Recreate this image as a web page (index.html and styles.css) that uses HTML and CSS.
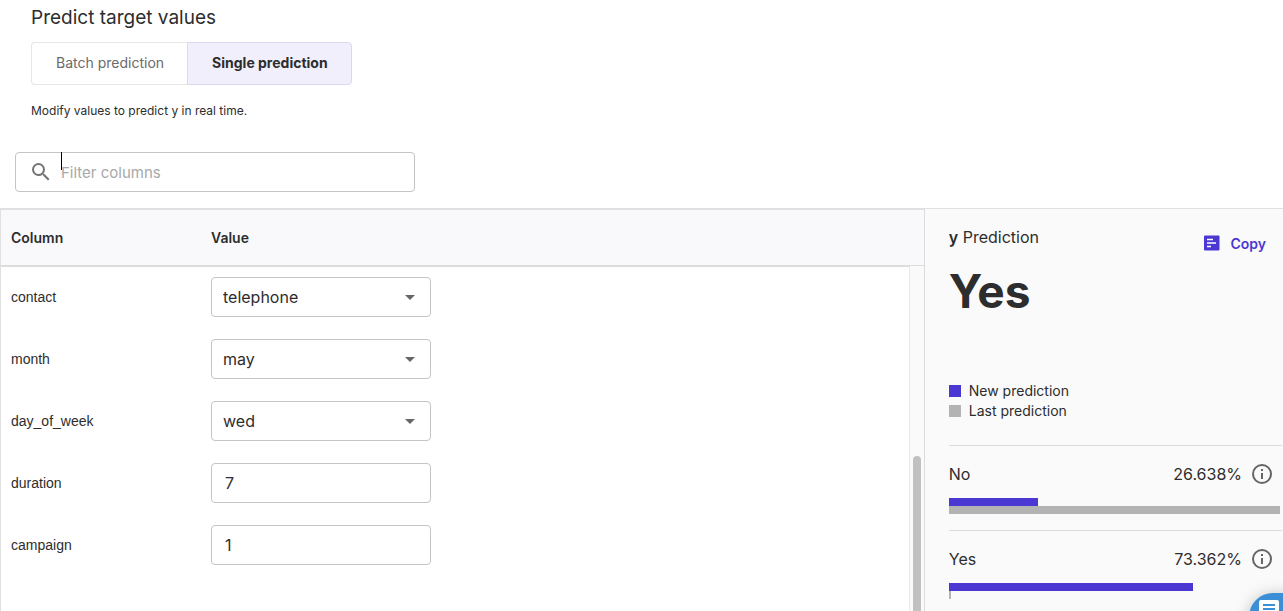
FILE: index.html
```html
<!DOCTYPE html>
<html lang="en">
<head>
    <meta charset="UTF-8">
    <meta name="viewport" content="width=device-width, initial-scale=1.0">
    <title>Predict target values</title>
    <link rel="stylesheet" href="styles.css">
</head>
<body>
    <header class="header">
      <h1>Predict target values</h1>
      <div class="tabs">
        <button type="button" class="tab">Batch prediction</button>
        <button type="button" class="tab active">Single prediction</button>
      </div>
      <p class="hint">Modify values to predict y in real time.</p>
    </header>

    <div class="filter">
      <svg class="search-icon" viewBox="0 0 24 24" aria-hidden="true">
        <path d="M15.5 14h-.79l-.28-.27A6.471 6.471 0 0 0 16 9.5 6.5 6.5 0 1 0 9.5 16c1.61 0 3.09-.59 4.23-1.57l.27.28v.79l5 4.99L20.49 19l-4.99-5zm-6 0C7.01 14 5 11.99 5 9.5S7.01 5 9.5 5 14 7.01 14 9.5 11.99 14 9.5 14z"/>
      </svg>
      <input type="text" id="filter" placeholder="Filter columns" aria-label="Filter columns">
      <span class="caret"></span>
    </div>

    <main class="content">
      <section class="columns">
        <div class="scroll-area">
          <table>
            <thead>
              <tr>
                <th class="name">Column</th>
                <th>Value</th>
              </tr>
            </thead>
            <tbody>
              <tr>
                <td><label for="contact">contact</label></td>
                <td>
                  <div class="select">
                    <select id="contact">
                      <option>cellular</option>
                      <option selected>telephone</option>
                    </select>
                    <svg viewBox="0 0 24 24" aria-hidden="true"><path d="M7 10l5 5 5-5z"/></svg>
                  </div>
                </td>
              </tr>
              <tr>
                <td><label for="month">month</label></td>
                <td>
                  <div class="select">
                    <select id="month">
                      <option>apr</option>
                      <option selected>may</option>
                      <option>jun</option>
                    </select>
                    <svg viewBox="0 0 24 24" aria-hidden="true"><path d="M7 10l5 5 5-5z"/></svg>
                  </div>
                </td>
              </tr>
              <tr>
                <td><label for="day_of_week">day_of_week</label></td>
                <td>
                  <div class="select">
                    <select id="day_of_week">
                      <option>mon</option>
                      <option>tue</option>
                      <option selected>wed</option>
                      <option>thu</option>
                      <option>fri</option>
                    </select>
                    <svg viewBox="0 0 24 24" aria-hidden="true"><path d="M7 10l5 5 5-5z"/></svg>
                  </div>
                </td>
              </tr>
              <tr>
                <td><label for="duration">duration</label></td>
                <td><input type="text" class="field" id="duration" value="7"></td>
              </tr>
              <tr>
                <td><label for="campaign">campaign</label></td>
                <td><input type="text" class="field" id="campaign" value="1"></td>
              </tr>
            </tbody>
          </table>
          <div class="track"><div class="thumb"></div></div>
        </div>
      </section>

      <aside class="prediction">
        <div class="prediction-head">
          <h2><b>y</b> Prediction</h2>
          <button type="button" class="copy">
            <svg viewBox="0 0 16 16" aria-hidden="true">
              <rect y="0.5" width="15.5" height="15" rx="1"/>
              <path d="M3 4.5h6M3 8h9M3 11.5h4"/>
            </svg>
            Copy
          </button>
        </div>
        <div class="result">Yes</div>

        <ul class="legend">
          <li><span class="swatch new"></span>New prediction</li>
          <li><span class="swatch last"></span>Last prediction</li>
        </ul>

        <div class="class-row">
          <div class="class-label">
            <span>No</span>
            <span class="percent">26.638%</span>
            <svg class="info" viewBox="0 0 20 20" aria-hidden="true">
              <circle cx="10" cy="10" r="9"/>
              <path d="M10 5v2M10 9v6"/>
            </svg>
          </div>
          <div class="bar new" style="width: 26.638%"></div>
          <div class="bar last" style="width: 99.4%"></div>
        </div>

        <div class="class-row">
          <div class="class-label">
            <span>Yes</span>
            <span class="percent">73.362%</span>
            <svg class="info" viewBox="0 0 20 20" aria-hidden="true">
              <circle cx="10" cy="10" r="9"/>
              <path d="M10 5v2M10 9v6"/>
            </svg>
          </div>
          <div class="bar new" style="width: 73.362%"></div>
          <div class="bar last" style="width: 0.6%"></div>
        </div>
      </aside>
    </main>

    <button type="button" class="chat" aria-label="Open chat">
      <svg viewBox="0 0 24 24" aria-hidden="true">
        <path class="bubble" d="M2 0h16a2 2 0 0 1 2 2v14l4 5H2a2 2 0 0 1-2-2V2a2 2 0 0 1 2-2z"/>
        <path class="lines" d="M4 5h12M4 9h12M4 13h8"/>
      </svg>
    </button>
</body>
</html>
```

FILE: styles.css
```css
* {
  box-sizing: border-box;
}

body {
  margin: 0;
  height: 100vh;
  display: flex;
  flex-direction: column;
  overflow: hidden;
  font-family: Inter, "Liberation Sans", sans-serif;
  font-size: 14px;
  color: #2d2d2d;
  background-color: #fff;
}

h1, h2, p, ul {
  margin: 0;
  padding: 0;
}

button, input, select {
  font-family: inherit;
  color: inherit;
}

.header {
  padding: 6px 31px 0;
}

h1 {
  font-size: 19px;
  line-height: 24px;
  font-weight: 400;
}

.tabs {
  display: flex;
  margin-top: 12px;
}

.tab {
  height: 43px;
  padding: 0 23px 2px 24px;
  border: 1px solid #e6e6e6;
  border-right: none;
  border-radius: 4px 0 0 4px;
  background-color: #fff;
  color: #6b6b6b;
  font-size: 14px;
  cursor: pointer;
}

.tab.active {
  border: 1px solid #dcd8ee;
  border-radius: 0 4px 4px 0;
  background-color: #f1effb;
  color: #2d2d2d;
  font-weight: 700;
}

.hint {
  margin-top: 18px;
  font-size: 12px;
  line-height: 16px;
}

.filter {
  position: relative;
  display: flex;
  align-items: center;
  width: 400px;
  height: 40px;
  margin: 33px 15px 16px;
  padding-left: 13px;
  border: 1px solid #c4c4c4;
  border-radius: 4px;
}

.filter input {
  flex: 1;
  margin-left: 8px;
  padding: 0;
  border: none;
  outline: none;
  font-size: 15px;
  background: none;
}

.filter input::placeholder {
  color: #a8a8a8;
}

.search-icon {
  width: 24px;
  height: 24px;
  fill: #757575;
}

.caret {
  position: absolute;
  top: -1px;
  left: 45px;
  width: 1px;
  height: 18px;
  background-color: #000;
}

.content {
  flex: 1;
  display: flex;
  min-height: 0;
  border-top: 1px solid #e0e0e0;
}

.columns {
  flex: 1;
  border-top: 1px solid #e0e0e0;
  border-left: 1px solid #e0e0e0;
}

.scroll-area {
  position: relative;
  height: 100%;
  overflow: hidden;
}

table {
  width: 100%;
  border-spacing: 0;
}

th {
  height: 57px;
  padding: 0 10px;
  text-align: left;
  font-weight: 600;
  background-color: #f9f9fc;
  border-bottom: 2px solid #dcdcdc;
}

th.name {
  width: 200px;
}

td {
  height: 62px;
  padding: 0 10px 2px;
  font-family: "Liberation Sans", sans-serif;
}

td label {
  display: block;
  padding-bottom: 1px;
}

.select {
  position: relative;
  width: 220px;
}

.select select,
.field {
  display: block;
  width: 220px;
  height: 40px;
  padding: 0 11px;
  border: 1px solid #c4c4c4;
  border-radius: 4px;
  background-color: #fff;
  font-family: Inter, "Liberation Sans", sans-serif;
  font-size: 16px;
  appearance: none;
}

.field {
  padding: 0 13px;
}

.select svg {
  position: absolute;
  top: 8px;
  right: 9px;
  width: 24px;
  height: 24px;
  fill: #666;
  pointer-events: none;
}

.track {
  position: absolute;
  top: 56px;
  right: 0;
  bottom: 0;
  width: 15px;
  padding: 0 3px;
  border-left: 1px solid #e8e8e8;
  background-color: #fafafa;
  display: flex;
  align-items: flex-end;
}

.thumb {
  width: 8px;
  height: 45%;
  border-radius: 4px 4px 0 0;
  background-color: #c1c1c1;
}

.prediction {
  width: 28%;
  padding: 18px 1px 0 24px;
  border-left: 1px solid #dcdcdc;
  background-color: #fafafa;
}

.prediction-head {
  display: flex;
  justify-content: space-between;
  align-items: flex-start;
  padding-right: 16px;
}

h2 {
  font-size: 16px;
  line-height: 20px;
  font-weight: 400;
}

h2 b {
  font-weight: 600;
}

.copy {
  display: flex;
  align-items: center;
  gap: 10px;
  height: 32px;
  padding: 0;
  border: none;
  background: none;
  color: #4b38d3;
  font-size: 14px;
  font-weight: 600;
  cursor: pointer;
}

.copy svg {
  width: 16px;
  height: 16px;
  fill: #4b38d3;
}

.copy path {
  fill: none;
  stroke: #fff;
  stroke-width: 1.5;
}

.result {
  font-size: 46px;
  line-height: 64px;
  font-weight: 700;
}

.legend {
  margin-top: 58px;
  list-style: none;
  line-height: 20px;
}

.legend li {
  display: flex;
  align-items: center;
  gap: 8px;
}

.swatch {
  width: 12px;
  height: 12px;
}

.new {
  background-color: #4b38d3;
}

.last {
  background-color: #b3b3b3;
}

.class-row {
  height: 85px;
  padding-top: 16px;
  border-top: 1px solid #dcdcdc;
}

.legend + .class-row {
  margin-top: 24px;
}

.class-label {
  display: flex;
  align-items: center;
  margin-bottom: 12px;
  padding-right: 10px;
  font-size: 16px;
  line-height: 24px;
}

.percent {
  margin-left: auto;
  margin-right: 10px;
}

.info {
  width: 20px;
  height: 20px;
  fill: none;
  stroke: #666;
  stroke-width: 2;
}

.bar {
  height: 8px;
}

.chat {
  position: fixed;
  right: -26px;
  bottom: -42px;
  display: flex;
  align-items: flex-start;
  width: 60px;
  height: 60px;
  padding: 7px 10px;
  border: none;
  border-radius: 24px;
  background-color: #3a8fd6;
  box-shadow: 0 2px 16px rgba(0, 0, 0, 0.25);
  cursor: pointer;
}

.chat svg {
  width: 24px;
  height: 24px;
}

.bubble {
  fill: #fff;
}

.lines {
  fill: none;
  stroke: #3a8fd6;
  stroke-width: 2;
}
```
